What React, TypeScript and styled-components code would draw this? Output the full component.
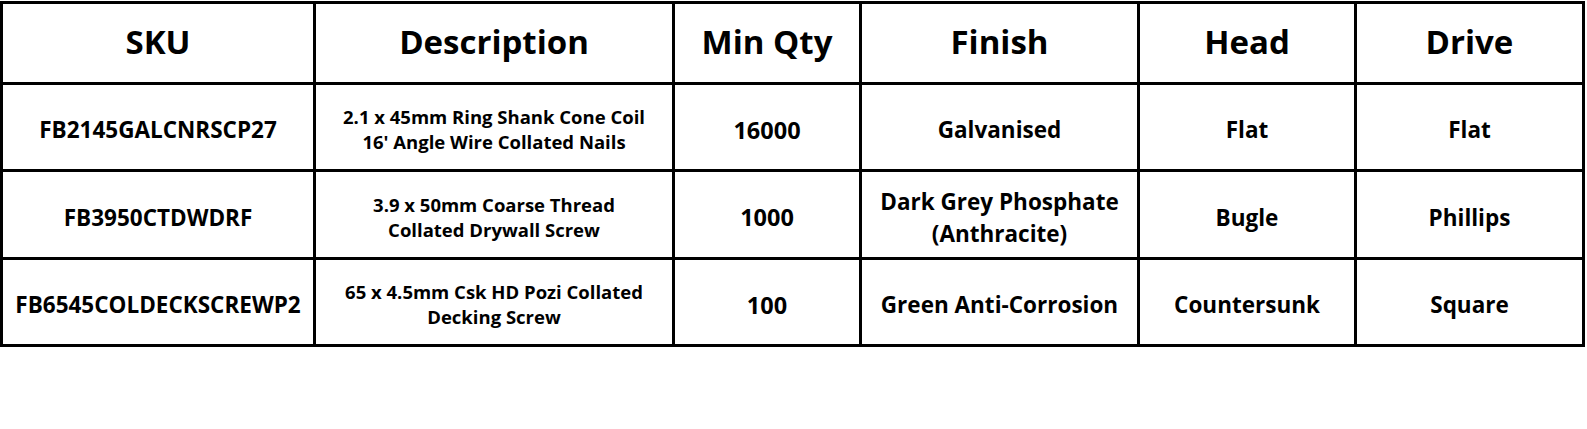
import React from "react";
import styled, { createGlobalStyle } from "styled-components";

const Global = createGlobalStyle`
  html, body { margin: 0; padding: 0; background: #ffffff; }
  body { font-family: "Open Sans", "Liberation Sans", sans-serif; }
`;

const Page = styled.div`
  padding-top: 1px;
  width: 1587px;
  height: 428px;
  background: #fff;
`;

const Grid = styled.div`
  display: grid;
  width: max-content;
  grid-template-columns: 310px 356px 184px 275px 214px 225px;
  grid-template-rows: 78px 84px 85px 84px;
  gap: 3px;
  padding: 3px;
  background: #000;
`;

const HeadCell = styled.div`
  background: #fff;
  display: flex;
  align-items: center;
  justify-content: center;
  padding-bottom: 4px;
  box-sizing: border-box;
  font-family: "Open Sans", sans-serif;
  font-weight: 700;
  font-size: 33px;
  color: #000;
`;

const Cell = styled.div<{ $size: number; $lh: number }>`
  background: #fff;
  display: flex;
  align-items: center;
  justify-content: center;
  text-align: center;
  box-sizing: border-box;
  padding: 6px 4px 0;
  font-family: "Open Sans", sans-serif;
  font-weight: 700;
  font-size: ${(p) => p.$size}px;
  line-height: ${(p) => p.$lh};
  color: #000;
  white-space: nowrap;
`;

const headers = ["SKU", "Description", "Min Qty", "Finish", "Head", "Drive"];

const rows = [
  ["FB2145GALCNRSCP27", "2.1 x 45mm Ring Shank Cone Coil\n16' Angle Wire Collated Nails", "16000", "Galvanised", "Flat", "Flat"],
  ["FB3950CTDWDRF", "3.9 x 50mm Coarse Thread\nCollated Drywall Screw", "1000", "Dark Grey Phosphate\n(Anthracite)", "Bugle", "Phillips"],
  ["FB6545COLDECKSCREWP2", "65 x 4.5mm Csk HD Pozi Collated\nDecking Screw", "100", "Green Anti-Corrosion", "Countersunk", "Square"],
];

const sizes = [22.5, 18.5, 23.5, 22.5, 22.5, 22.5];
const lineHeights = [1.3, 1.35, 1.3, 1.42, 1.3, 1.3];

const Lines = ({ text }: { text: string }) => (
  <span>
    {text.split("\n").map((t, i) => (
      <React.Fragment key={i}>
        {i > 0 && <br />}
        {t}
      </React.Fragment>
    ))}
  </span>
);

export default function App() {
  return (
    <Page>
      <Global />
      <Grid>
        {headers.map((h) => (
          <HeadCell key={h}>{h}</HeadCell>
        ))}
        {rows.map((r, ri) =>
          r.map((c, ci) => (
            <Cell key={`${ri}-${ci}`} $size={sizes[ci]} $lh={lineHeights[ci]}>
              <Lines text={c} />
            </Cell>
          ))
        )}
      </Grid>
    </Page>
  );
}
